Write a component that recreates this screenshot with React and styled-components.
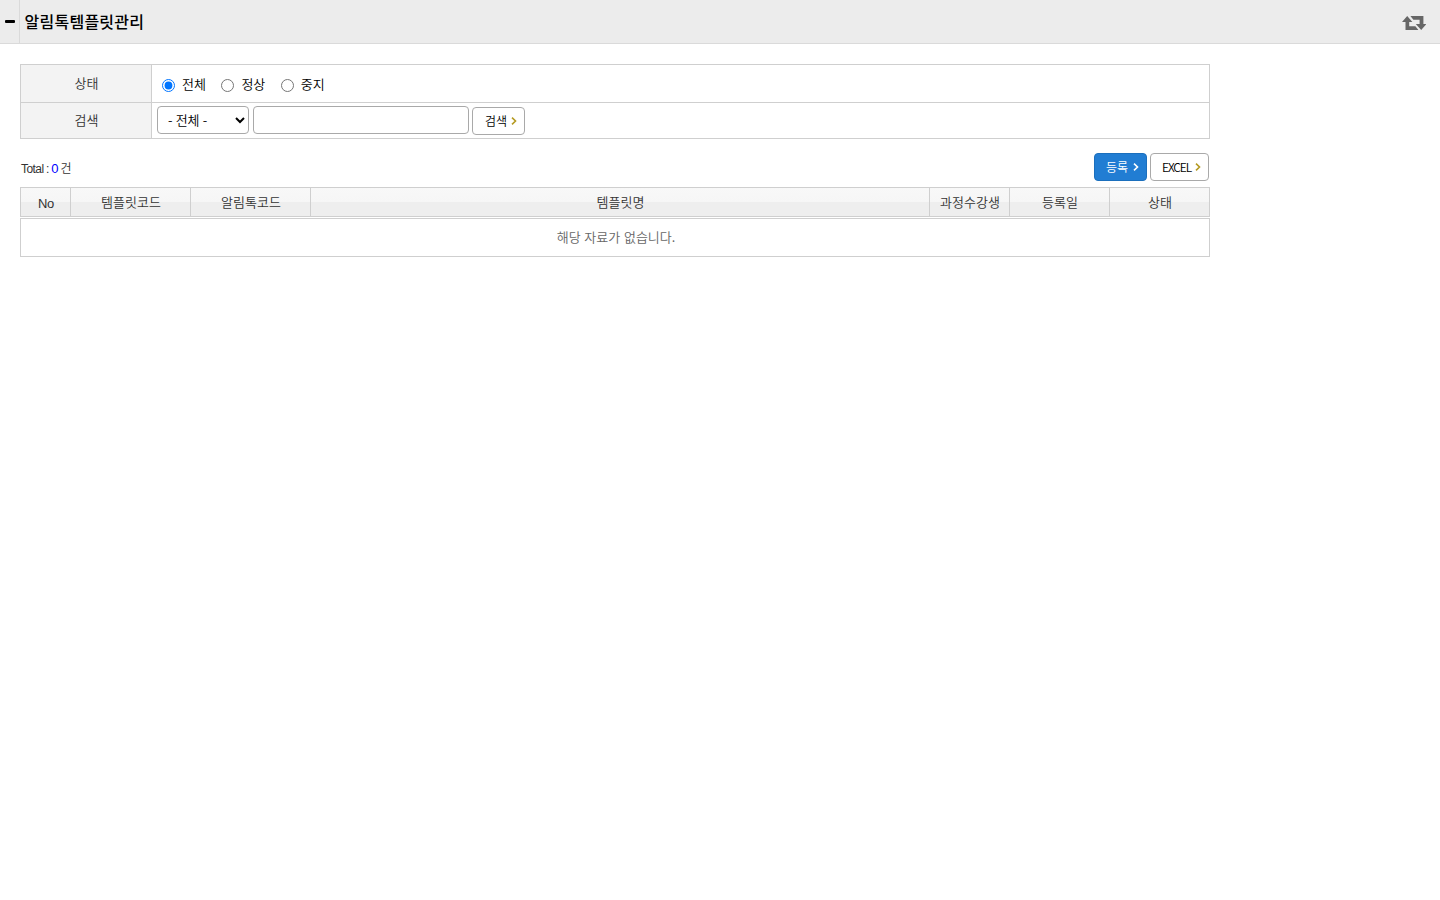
import styled, { createGlobalStyle } from 'styled-components';
import { useState } from 'react';

const GlobalStyle = createGlobalStyle`
  * {
    box-sizing: border-box;
  }
  body {
    margin: 0;
    background: #fff;
    font-family: "Noto Sans CJK KR", sans-serif;
    font-size: 13px;
    font-weight: 350;
    color: #333;
  }
  input, select, button {
    font-family: inherit;
    font-weight: inherit;
  }
`;

const Header = styled.header`
  height: 44px;
  display: flex;
  align-items: center;
  background: #ececec;
  border-bottom: 1px solid #dadada;
`;

const MenuToggle = styled.button`
  width: 20px;
  height: 43px;
  padding: 0 0 1px 5px;
  display: flex;
  align-items: center;
  border: 0;
  border-right: 1px solid #dadada;
  background: transparent;
`;

const Minus = styled.span`
  width: 10px;
  height: 3px;
  border-radius: 1px;
  background: #000;
`;

const Title = styled.h1`
  flex: 1;
  margin: 0;
  padding: 0 0 2px 4.5px;
  font-size: 16px;
  line-height: 24px;
  font-weight: 500;
  letter-spacing: 0.25px;
  color: #000;
`;

const Refresh = styled.svg`
  width: 24px;
  height: 14px;
  margin: 3px 14px 0 0;
  fill: #666;
`;

const Content = styled.main`
  width: 1190px;
  margin: 20px 0 0 20px;
`;

const Filter = styled.div`
  border: 1px solid #cfcfcf;
`;

const FilterRow = styled.div`
  display: flex;
  height: ${(props) => props.height}px;
  & + & {
    border-top: 1px solid #cfcfcf;
  }
`;

const FilterLabel = styled.div`
  width: 131px;
  display: flex;
  align-items: center;
  justify-content: center;
  padding: 0 0 2px 1px;
  background: #f3f3f3;
  border-right: 1px solid #cfcfcf;
  line-height: 18px;
`;

const RadioGroup = styled.div`
  display: flex;
  gap: 15px;
  padding: 3px 0 0 10px;
`;

const RadioLabel = styled.label`
  display: flex;
  align-items: center;
  gap: 7px;
  line-height: 18px;
  color: #000;
`;

const Radio = styled.input`
  width: 13px;
  height: 13px;
  margin: 0;
`;

const RadioText = styled.span`
  width: 24.4px;
  padding-bottom: 2px;
  white-space: nowrap;
`;

const SearchControls = styled.div`
  display: flex;
  padding: 3px 0 0 5px;
`;

const Select = styled.select`
  width: 92px;
  height: 28px;
  padding: 0 0 1px 6px;
  border: 1px solid #a9a9a9;
  border-radius: 4px;
  background: #fff;
  color: #000;
  font-size: 13px;
  word-spacing: 0.3px;
`;

const TextInput = styled.input`
  width: 216px;
  height: 28px;
  margin: 0 3px 0 4px;
  padding: 0 6px;
  border: 1px solid #a9a9a9;
  border-radius: 4px;
  font-size: 13px;
`;

const Button = styled.button`
  width: ${(props) => props.$width}px;
  height: 28px;
  padding: 0 7px 0 11px;
  display: flex;
  align-items: center;
  justify-content: space-between;
  border: 1px solid ${(props) => (props.$primary ? '#1b6fbd' : '#a9a9a9')};
  border-radius: 4px;
  background: ${(props) => (props.$primary ? '#217dd3' : '#fff')};
  color: ${(props) => (props.$primary ? '#fff' : '#000')};
  font-size: 12px;
  line-height: 18px;
  letter-spacing: ${(props) => props.$spacing || 0}px;
  white-space: nowrap;
`;

const SearchButton = styled(Button)`
  margin-top: 1px;
  padding: 0 7px 0 12px;
`;

const Chevron = styled.svg`
  width: 6px;
  height: 8px;
  flex: none;
  fill: none;
  stroke: ${(props) => props.color};
  stroke-width: 1.6;
`;

const ListBar = styled.div`
  display: flex;
  align-items: center;
  justify-content: space-between;
  height: 28px;
  margin: 14px 0 6px;
  padding: 0 1px;
`;

const Total = styled.div`
  padding-top: 3px;
  font-family: "Liberation Sans", "Noto Sans CJK KR", sans-serif;
  font-size: 12px;
  line-height: 18px;
  letter-spacing: -0.55px;
  word-spacing: -0.3px;
`;

const Count = styled.span`
  color: #0000ff;
  font-size: 13px;
`;

const Actions = styled.div`
  display: flex;
  gap: 3px;
`;

const columns = '50px 120px 120px 619px 80px 100px 99px';

const TableHead = styled.div`
  display: grid;
  grid-template-columns: ${columns};
  height: 30px;
  border: 1px solid #cfcfcf;
  background: linear-gradient(#f8f8f8 0, #f6f6f6 50%, #eeeeee 50%, #eeeeee 100%);
`;

const HeadCell = styled.div`
  display: flex;
  align-items: center;
  justify-content: center;
  padding-left: 1px;
  border-right: 1px solid #cfcfcf;
  line-height: 18px;
  &:first-child {
    font-family: "Liberation Sans", sans-serif;
    padding-top: 3px;
    letter-spacing: -0.4px;
  }
  &:last-child {
    border-right: 0;
  }
`;

const EmptyRow = styled.div`
  display: flex;
  align-items: center;
  justify-content: center;
  height: 39px;
  margin-top: 1px;
  padding: 0 0 2px 2px;
  border: 1px solid #cfcfcf;
  color: #666;
  line-height: 18px;
  word-spacing: 0.8px;
`;

const headers = ['No', '템플릿코드', '알림톡코드', '템플릿명', '과정수강생', '등록일', '상태'];
const states = ['전체', '정상', '중지'];

function Arrow({ color }) {
  return (
    <Chevron viewBox="0 0 6 8" color={color}>
      <path d="M1 .7 4.5 4 1 7.3" />
    </Chevron>
  );
}

export default function App() {
  const [state, setState] = useState('전체');
  const [keyword, setKeyword] = useState('');

  return (
    <>
      <GlobalStyle />
      <Header>
        <MenuToggle aria-label="menu">
          <Minus />
        </MenuToggle>
        <Title>알림톡템플릿관리</Title>
        <Refresh viewBox="0 0 24 14">
          <path d="M5.2 0 10.4 6H7.2V10.3H13.4L16.4 14H3.5V6H0Z" />
          <path d="M8.4 0H21.4V8H24.4L19.2 14 13.8 8H17.6V3.7H11.4Z" />
        </Refresh>
      </Header>
      <Content>
        <Filter>
          <FilterRow height={37}>
            <FilterLabel>상태</FilterLabel>
            <RadioGroup>
              {states.map((item) => (
                <RadioLabel key={item}>
                  <Radio
                    type="radio"
                    name="state"
                    checked={state === item}
                    onChange={() => setState(item)}
                  />
                  <RadioText>{item}</RadioText>
                </RadioLabel>
              ))}
            </RadioGroup>
          </FilterRow>
          <FilterRow height={36}>
            <FilterLabel>검색</FilterLabel>
            <SearchControls>
              <Select>
                <option>- 전체 -</option>
                <option>템플릿코드</option>
                <option>템플릿명</option>
              </Select>
              <TextInput value={keyword} onChange={(e) => setKeyword(e.target.value)} />
              <SearchButton $width={53}>
                검색
                <Arrow color="#b59a22" />
              </SearchButton>
            </SearchControls>
          </FilterRow>
        </Filter>
        <ListBar>
          <Total>
            Total : <Count>0</Count> 건
          </Total>
          <Actions>
            <Button $width={53} $primary>
              등록
              <Arrow color="#fff" />
            </Button>
            <Button $width={59} $spacing={-1.1}>
              EXCEL
              <Arrow color="#b59a22" />
            </Button>
          </Actions>
        </ListBar>
        <TableHead>
          {headers.map((name) => (
            <HeadCell key={name}>{name}</HeadCell>
          ))}
        </TableHead>
        <EmptyRow>해당 자료가 없습니다.</EmptyRow>
      </Content>
    </>
  );
}
